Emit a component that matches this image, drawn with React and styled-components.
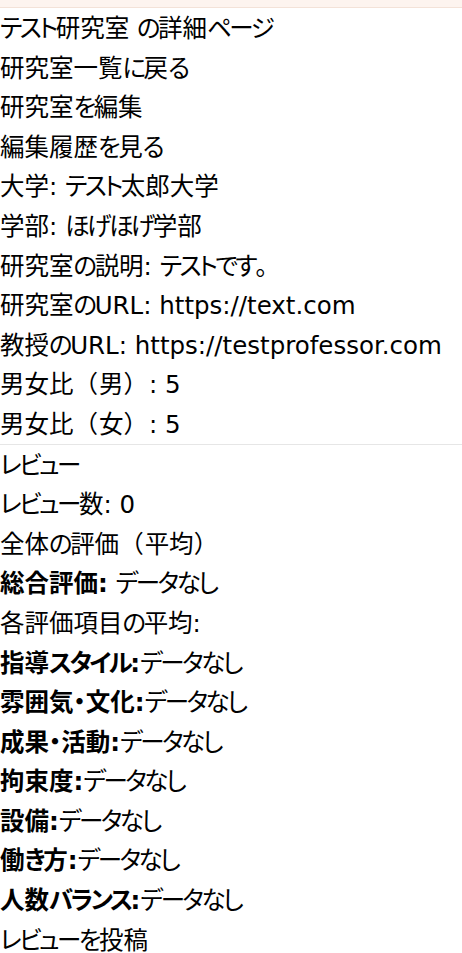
import React from "react";
import styled, { createGlobalStyle } from "styled-components";

const Global = createGlobalStyle`
  html, body { margin: 0; padding: 0; background: #fff; }
  body {
    font-family: "DejaVu Sans", "Noto Sans CJK JP", sans-serif;
    font-feature-settings: "palt";
    color: #000;
  }
`;

const TopBar = styled.div`
  height: 7px;
  background: #fdf4ef;
  border-bottom: 1px solid #f3e2d8;
`;

const Section = styled.section`
  display: flex;
  flex-direction: column;
  border-top: ${(p) => (p.$divided ? "1px solid #e6e6e6" : "none")};
`;

const Line = styled.div`
  font-size: 24.5px;
  line-height: 39.6px;
  height: 39.6px;
  padding-top: 1px;
  box-sizing: border-box;
  white-space: nowrap;
`;

const Label = styled.strong`
  font-weight: 700;
`;

const Kana = styled.span`
  letter-spacing: -2.5px;
`;

const Paren = styled.span`
  font-feature-settings: normal;
  letter-spacing: 1px;
`;

const SPLIT = /([\u3041-\u30fa\u30fc]+|[（）]+)/;

function Jp({ text }) {
  return text.split(SPLIT).map((part, i) => {
    if (!part) return null;
    if (/^[（）]+$/.test(part)) return <Paren key={i}>{part}</Paren>;
    if (/^[\u3041-\u30fa\u30fc]+$/.test(part)) return <Kana key={i}>{part}</Kana>;
    return <React.Fragment key={i}>{part}</React.Fragment>;
  });
}

const info = [
  "テスト研究室 の詳細ページ",
  "研究室一覧に戻る",
  "研究室を編集",
  "編集履歴を見る",
  "大学: テスト太郎大学",
  "学部: ほげほげ学部",
  "研究室の説明: テストです。",
  "研究室のURL: https://text.com",
  "教授のURL: https://testprofessor.com",
  "男女比（男）: 5",
  "男女比（女）: 5",
];

const items = [
  "指導スタイル",
  "雰囲気・文化",
  "成果・活動",
  "拘束度",
  "設備",
  "働き方",
  "人数バランス",
];

export default function App() {
  return (
    <>
      <Global />
      <TopBar />
      <Section>
        {info.map((t) => (
          <Line key={t}>
            <Jp text={t} />
          </Line>
        ))}
      </Section>
      <Section $divided>
        <Line><Jp text="レビュー" /></Line>
        <Line><Jp text="レビュー数: 0" /></Line>
        <Line><Jp text="全体の評価（平均）" /></Line>
        <Line>
          <Label><Jp text="総合評価:" /></Label> <Jp text="データなし" />
        </Line>
        <Line><Jp text="各評価項目の平均:" /></Line>
        {items.map((t) => (
          <Line key={t}>
            <Label><Jp text={t + ":"} /></Label><Jp text="データなし" />
          </Line>
        ))}
        <Line><Jp text="レビューを投稿" /></Line>
      </Section>
    </>
  );
}
